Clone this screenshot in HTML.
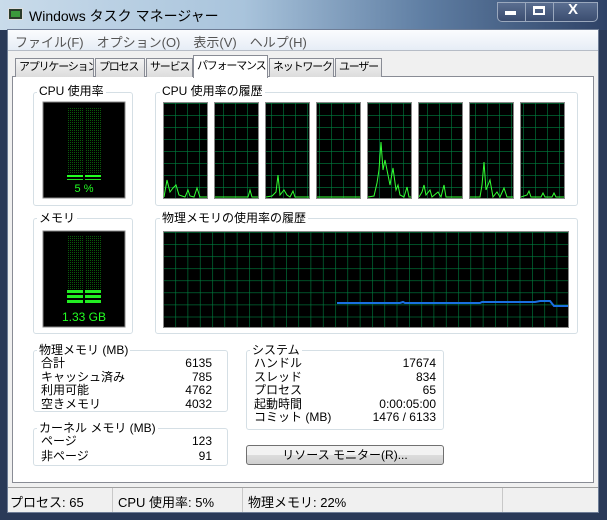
<!DOCTYPE html>
<html><head><meta charset="utf-8"><style>
*{margin:0;padding:0;box-sizing:border-box}
body{width:607px;height:520px;overflow:hidden;font-family:"Liberation Sans","Noto Sans CJK JP",sans-serif;font-size:12px;color:#000;background:#2a3a58;position:relative}
.a{position:absolute}
.title{left:0;top:0;width:607px;height:30px;background:linear-gradient(90deg,#c9dbea 0%,#a9c4dc 40%,#5f7ea3 70%,#2e4266 100%)}
.win{left:7px;top:29px;width:592px;height:484px;background:#f0f0f0;border:1px solid #6e7d96}
.menu{left:8px;top:30px;width:590px;height:21px;background:linear-gradient(#fbfcfe,#e6edf6);border-bottom:1px solid #b6bcc6;color:#555;font-size:13px}
.menu span{margin-right:13px}
.panel{left:12px;top:76px;width:582px;height:407px;background:#fff;border:1px solid #898c95}
.tab{top:58px;height:19px;border:1px solid #898c95;border-bottom:none;background:linear-gradient(#f4f4f4,#dcdcdc);font-size:11px;line-height:16px;padding:0 0 0 3px;letter-spacing:-1.2px;white-space:nowrap;overflow:hidden}
.grp{border:1px solid #d5dfe5;border-radius:3px}
.lbl{background:#fff;padding:0 2px;font-size:12px;line-height:14px}
.row{position:absolute;left:8px;right:8px;height:14px;font-size:12px;line-height:14px}
.row b{font-weight:normal;position:absolute;right:0;top:0}
.status{left:8px;top:487px;width:590px;height:25px;background:#f0f0f0;border-top:1px solid #a0a0a0;font-size:13px}
</style></head><body>
<div class="a title"></div>
<div class="a" style="left:8px;top:8px;width:15px;height:12px;background:#2b3b2b;border:1px solid #ddd"><div style="margin:2px;width:9px;height:6px;background:#3c9a3c"></div></div>
<div class="a" style="left:29px;top:6px;font-size:14px;color:#000">Windows タスク マネージャー</div>
<div class="a" style="left:497px;top:2px;width:101px;height:20px;border:1px solid #9aa8bd;border-radius:0 0 5px 5px;background:linear-gradient(#5a6e90,#3b4d70)"></div>
<div class="a" style="left:525px;top:2px;width:1px;height:20px;background:#9aa8bd"></div>
<div class="a" style="left:553px;top:2px;width:1px;height:20px;background:#9aa8bd"></div>
<div class="a" style="left:505px;top:11px;width:11px;height:4px;background:#fff"></div>
<div class="a" style="left:533px;top:6px;width:12px;height:9px;border:2px solid #fff;border-top-width:3px"></div>
<div class="a" style="left:568px;top:1px;color:#fff;font-weight:bold;font-size:15px">X</div>
<div class="a win"></div>
<div class="a menu"><div style="padding:2px 0 0 7px"><span>ファイル(F)</span><span>オプション(O)</span><span>表示(V)</span><span>ヘルプ(H)</span></div></div>
<div class="a panel"></div>
<div class="a tab" style="left:15px;width:79px">アプリケーション</div>
<div class="a tab" style="left:95px;width:50px">プロセス</div>
<div class="a tab" style="left:146px;width:47px">サービス</div>
<div class="a tab" style="left:193px;top:55px;height:23px;width:75px;background:#fff;padding-top:2px">パフォーマンス</div>
<div class="a tab" style="left:269px;width:65px">ネットワーク</div>
<div class="a tab" style="left:335px;width:47px">ユーザー</div>

<div class="a grp" style="left:33px;top:92px;width:100px;height:114px"></div>
<div class="a lbl" style="left:37px;top:84px">CPU 使用率</div>
<div class="a grp" style="left:155px;top:92px;width:423px;height:114px"></div>
<div class="a lbl" style="left:160px;top:84px">CPU 使用率の履歴</div>
<div class="a grp" style="left:33px;top:218px;width:100px;height:116px"></div>
<div class="a lbl" style="left:37px;top:211px">メモリ</div>
<div class="a grp" style="left:155px;top:218px;width:423px;height:116px"></div>
<div class="a lbl" style="left:160px;top:211px">物理メモリの使用率の履歴</div>

<svg class="a" style="left:0;top:0" width="607" height="520">
<defs>
<pattern id="g" x="163" y="103" width="12" height="12" patternUnits="userSpaceOnUse"><rect width="12" height="12" fill="#000"/><path d="M0 0H12M0 0V12" stroke="#008040" stroke-width="1.2"/></pattern>
<pattern id="g2" x="163" y="232" width="12.3" height="12.1" patternUnits="userSpaceOnUse"><rect width="13" height="13" fill="#000"/><path d="M0 0H13M0 0V13" stroke="#008040" stroke-width="1.2"/></pattern>
<pattern id="d" width="2" height="2" patternUnits="userSpaceOnUse"><rect width="2" height="2" fill="#000"/><rect width="1" height="1" fill="#0a5a0a"/></pattern>
</defs>
<rect x="43" y="102" width="82" height="96" fill="#000" stroke="#888"/>
<rect x="67" y="108" width="16" height="66" fill="url(#d)"/><rect x="85" y="108" width="16" height="66" fill="url(#d)"/>
<rect x="67" y="175" width="16" height="2" fill="#2f2"/><rect x="85" y="175" width="16" height="2" fill="#2f2"/>
<rect x="67" y="179" width="16" height="1" fill="#2d2"/><rect x="85" y="179" width="16" height="1" fill="#2d2"/>
<text x="84" y="192" fill="#2f2" font-size="11" text-anchor="middle" font-family="Liberation Sans">5 %</text>
<rect x="43" y="231" width="82" height="96" fill="#000" stroke="#888"/>
<rect x="67" y="235" width="16" height="54" fill="url(#d)"/><rect x="85" y="235" width="16" height="54" fill="url(#d)"/>
<g fill="#2e2"><rect x="67" y="290" width="16" height="3"/><rect x="85" y="290" width="16" height="3"/><rect x="67" y="295" width="16" height="3"/><rect x="85" y="295" width="16" height="3"/><rect x="67" y="300" width="16" height="3"/><rect x="85" y="300" width="16" height="3"/></g>
<text x="84" y="321" fill="#2f2" font-size="12" text-anchor="middle" font-family="Liberation Sans">1.33 GB</text>
<g stroke="#888">
<rect x="163.5" y="102.5" width="44" height="96" fill="url(#g)"/>
<rect x="214.5" y="102.5" width="44" height="96" fill="url(#g)"/>
<rect x="265.5" y="102.5" width="44" height="96" fill="url(#g)"/>
<rect x="316.5" y="102.5" width="44" height="96" fill="url(#g)"/>
<rect x="367.5" y="102.5" width="44" height="96" fill="url(#g)"/>
<rect x="418.5" y="102.5" width="44" height="96" fill="url(#g)"/>
<rect x="469.5" y="102.5" width="44" height="96" fill="url(#g)"/>
<rect x="520.5" y="102.5" width="44" height="96" fill="url(#g)"/>
<rect x="163.5" y="231.5" width="405" height="96" fill="url(#g2)"/>
</g>
<g fill="none" stroke="#3f3" stroke-width="1">
<polyline points="164,197 167,180 170,192 173,188 176,185 179,195 182,196 185,197 188,190 190,196 194,197 197,188 200,197 207,197"/>
<polyline points="215,197 248,197 250,190 252,197 258,197"/>
<polyline points="266,197 272,196 276,192 278,175 280,195 284,190 287,195 290,197 293,191 295,197 309,197"/>
<polyline points="317,197 360,197"/>
<polyline points="368,197 374,196 377,183 379,170 381,142 383,170 385,160 388,175 390,185 393,168 396,190 398,185 400,195 404,197 407,187 409,197 411,197"/>
<polyline points="419,197 422,192 424,185 426,195 430,190 432,197 438,192 441,197 444,185 446,197 462,197"/>
<polyline points="470,197 480,197 482,185 484,162 486,190 490,180 493,197 497,192 500,197 504,188 507,197 513,197"/>
<polyline points="521,197 527,195 529,191 531,197 541,197 543,193 545,197 552,197 554,193 556,197 564,197"/>
</g>
<polyline fill="none" stroke="#1a6fe0" stroke-width="2" points="337,303 400,303 403,302 405,303 480,303 482,302 535,302 540,301 550,301 554,306 568,306"/>
</svg>

<div class="a grp" style="left:33px;top:350px;width:195px;height:62px"></div>
<div class="a lbl" style="left:37px;top:343px">物理メモリ (MB)</div>
<div class="a" style="left:33px;top:356px;width:187px">
<div class="row" style="top:0">合計<b>6135</b></div>
<div class="row" style="top:13.5px">キャッシュ済み<b>785</b></div>
<div class="row" style="top:27px">利用可能<b>4762</b></div>
<div class="row" style="top:40.5px">空きメモリ<b>4032</b></div>
</div>
<div class="a grp" style="left:33px;top:428px;width:195px;height:38px"></div>
<div class="a lbl" style="left:37px;top:421px">カーネル メモリ (MB)</div>
<div class="a" style="left:33px;top:434px;width:187px">
<div class="row" style="top:0">ページ<b>123</b></div>
<div class="row" style="top:15px">非ページ<b>91</b></div>
</div>
<div class="a grp" style="left:246px;top:350px;width:198px;height:80px"></div>
<div class="a lbl" style="left:250px;top:343px">システム</div>
<div class="a" style="left:246px;top:356px;width:198px">
<div class="row" style="top:0">ハンドル<b>17674</b></div>
<div class="row" style="top:13.5px">スレッド<b>834</b></div>
<div class="row" style="top:27px">プロセス<b>65</b></div>
<div class="row" style="top:40.5px">起動時間<b>0:00:05:00</b></div>
<div class="row" style="top:54px">コミット (MB)<b>1476 / 6133</b></div>
</div>
<div class="a" style="left:246px;top:445px;width:198px;height:20px;border:1px solid #707070;border-radius:3px;background:linear-gradient(#f2f2f2 50%,#dddddd 50%,#cfcfcf);text-align:center;font-size:12px;line-height:18px">リソース モニター(R)...</div>

<div class="a status">
<div class="a" style="left:2px;top:4px">プロセス: 65</div>
<div class="a" style="left:104px;top:0;width:1px;height:24px;background:#c8c8c8"></div>
<div class="a" style="left:110px;top:4px">CPU 使用率: 5%</div>
<div class="a" style="left:234px;top:0;width:1px;height:24px;background:#c8c8c8"></div>
<div class="a" style="left:240px;top:4px">物理メモリ: 22%</div>
<div class="a" style="left:494px;top:0;width:1px;height:24px;background:#c8c8c8"></div>
</div>
</body></html>
